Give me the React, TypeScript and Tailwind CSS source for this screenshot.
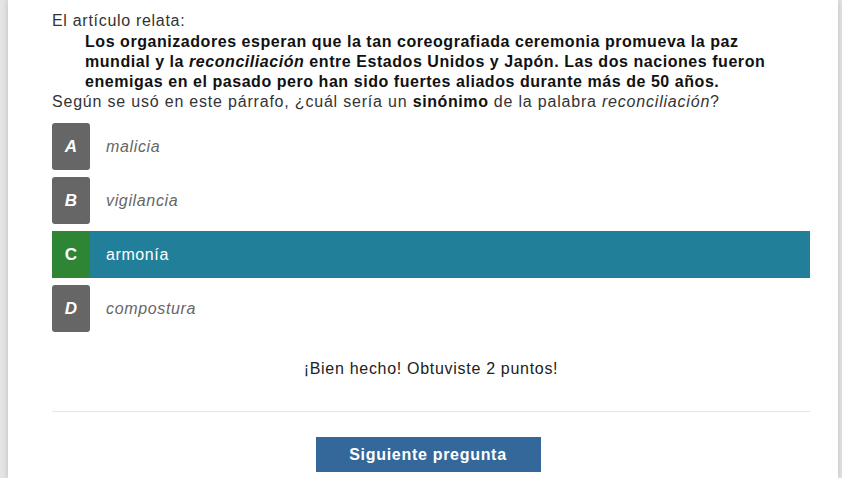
import React from "react";

const options = [
  { letter: "A", text: "malicia" },
  { letter: "B", text: "vigilancia" },
  { letter: "C", text: "armonía", correct: true },
  { letter: "D", text: "compostura" },
];

export default function App() {
  return (
    <div
      className="min-h-[478px] w-[842px] overflow-hidden bg-[#e4e4e4]"
      style={{ fontFamily: '"Liberation Sans", Arial, sans-serif' }}
    >
      <div className="ml-[8px] w-[830px] min-h-[478px] bg-white pl-[44px] pr-[28px] pt-[11px] shadow-[0_0_6px_rgba(0,0,0,0.18)]">
        <div className="text-[16px] leading-[20px] tracking-[0.7px] text-[#333]">El artículo relata:</div>
        <div className="mt-[1px] pl-[33px] pr-[20px] text-[16px] font-bold leading-[20px] tracking-[0.55px] text-[#111]">
          Los organizadores esperan que la tan coreografiada ceremonia promueva la paz mundial y la{" "}
          <i>reconciliación</i> entre Estados Unidos y Japón. Las dos naciones fueron enemigas en el pasado
          pero han sido fuertes aliados durante más de 50 años.
        </div>
        <div className="text-[16px] leading-[20px] tracking-[0.8px] text-[#333]">
          Según se usó en este párrafo, ¿cuál sería un <b className="tracking-[0.6px] text-[#111]">sinónimo</b> de la
          palabra <i>reconciliación</i>?
        </div>

        <div className="mt-[11px] flex flex-col gap-[7px]">
          {options.map((o) =>
            o.correct ? (
              <div key={o.letter} className="flex h-[47px] items-center bg-[#217f9a]">
                <div className="flex h-full w-[38px] items-center justify-center bg-[#2e8533] text-[17px] font-bold text-white">
                  {o.letter}
                </div>
                <div className="pl-[16px] text-[16px] tracking-[0.6px] text-white">{o.text}</div>
              </div>
            ) : (
              <div key={o.letter} className="flex h-[47px] items-center">
                <div className="flex h-full w-[38px] items-center justify-center rounded-[3px] bg-[#666666] text-[17px] font-bold italic text-white">
                  {o.letter}
                </div>
                <div className="pl-[16px] text-[16px] italic tracking-[0.65px] text-[#666]">{o.text}</div>
              </div>
            )
          )}
        </div>

        <div className="mt-[27px] text-center text-[16px] leading-[20px] tracking-[0.7px] text-[#222]">
          ¡Bien hecho! Obtuviste 2 puntos!
        </div>

        <div className="mt-[32px] h-px bg-[#e6e6e6]" />

        <div className="mt-[25px] flex justify-center pr-[6px]">
          <button className="h-[35px] w-[225px] bg-[#34679a] text-[16px] font-bold tracking-[0.7px] text-white">
            Siguiente pregunta
          </button>
        </div>
      </div>
    </div>
  );
}
